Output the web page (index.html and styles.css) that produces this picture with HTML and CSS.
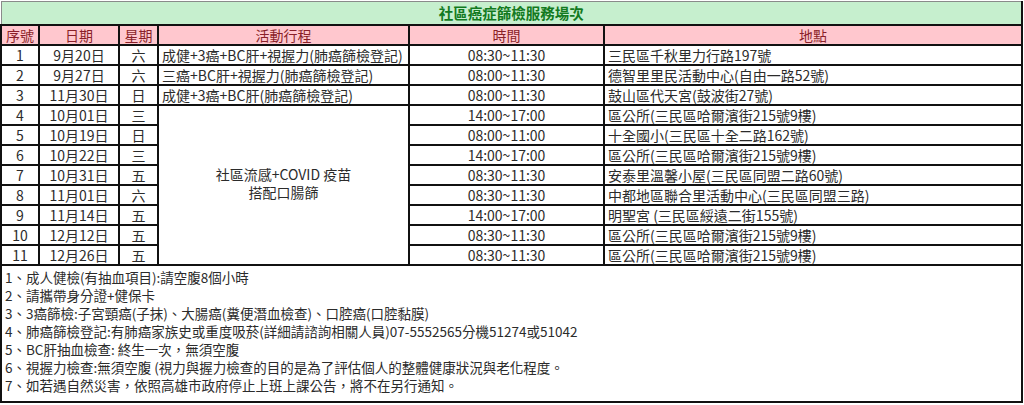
FILE: index.html
```html
<!DOCTYPE html>
<html lang="zh-Hant">
<head>
<meta charset="utf-8">
<title>社區癌症篩檢服務場次</title>
<link rel="stylesheet" href="styles.css">
</head>
<body>
<table class="sheet">
  <colgroup>
    <col class="c-no"><col class="c-date"><col class="c-week"><col class="c-act"><col class="c-time"><col class="c-loc">
  </colgroup>
  <tr class="title-row"><td colspan="6" class="title">社區癌症篩檢服務場次</td></tr>
  <tr class="head-row">
    <th>序號</th><th>日期</th><th>星期</th><th>活動行程</th><th>時間</th><th>地點</th>
  </tr>
  <tr><td class="ctr">1</td><td class="ctr">9月20日</td><td class="ctr">六</td><td class="lft">成健+3癌+BC肝+視握力(肺癌篩檢登記)</td><td class="ctr">08:30~11:30</td><td class="lft">三民區千秋里力行路197號</td></tr>
  <tr><td class="ctr">2</td><td class="ctr">9月27日</td><td class="ctr">六</td><td class="lft">三癌+BC肝+視握力(肺癌篩檢登記)</td><td class="ctr">08:00~11:30</td><td class="lft">德智里里民活動中心(自由一路52號)</td></tr>
  <tr><td class="ctr">3</td><td class="ctr">11月30日</td><td class="ctr">日</td><td class="lft">成健+3癌+BC肝(肺癌篩檢登記)</td><td class="ctr">08:00~11:30</td><td class="lft">鼓山區代天宮(鼓波街27號)</td></tr>
  <tr><td class="ctr">4</td><td class="ctr">10月01日</td><td class="ctr">三</td><td class="ctr merged" rowspan="8">社區流感+COVID 疫苗<br>搭配口腸篩</td><td class="ctr">14:00~17:00</td><td class="lft">區公所(三民區哈爾濱街215號9樓)</td></tr>
  <tr><td class="ctr">5</td><td class="ctr">10月19日</td><td class="ctr">日</td><td class="ctr">08:00~11:00</td><td class="lft">十全國小(三民區十全二路162號)</td></tr>
  <tr><td class="ctr">6</td><td class="ctr">10月22日</td><td class="ctr">三</td><td class="ctr">14:00~17:00</td><td class="lft">區公所(三民區哈爾濱街215號9樓)</td></tr>
  <tr><td class="ctr">7</td><td class="ctr">10月31日</td><td class="ctr">五</td><td class="ctr">08:30~11:30</td><td class="lft">安泰里溫馨小屋(三民區同盟二路60號)</td></tr>
  <tr><td class="ctr">8</td><td class="ctr">11月01日</td><td class="ctr">六</td><td class="ctr">08:30~11:30</td><td class="lft">中都地區聯合里活動中心(三民區同盟三路)</td></tr>
  <tr><td class="ctr">9</td><td class="ctr">11月14日</td><td class="ctr">五</td><td class="ctr">14:00~17:00</td><td class="lft">明聖宮 (三民區綏遠二街155號)</td></tr>
  <tr><td class="ctr">10</td><td class="ctr">12月12日</td><td class="ctr">五</td><td class="ctr">08:30~11:30</td><td class="lft">區公所(三民區哈爾濱街215號9樓)</td></tr>
  <tr><td class="ctr">11</td><td class="ctr">12月26日</td><td class="ctr">五</td><td class="ctr">08:30~11:30</td><td class="lft">區公所(三民區哈爾濱街215號9樓)</td></tr>
  <tr class="notes-row">
    <td colspan="6" class="notes">
      <div class="note">1、成人健檢(有抽血項目):請空腹8個小時</div>
      <div class="note">2、請攜帶身分證+健保卡</div>
      <div class="note">3、3癌篩檢:子宮頸癌(子抹)、大腸癌(糞便潛血檢查)、口腔癌(口腔黏膜)</div>
      <div class="note">4、肺癌篩檢登記:有肺癌家族史或重度吸菸(詳細請諮詢相關人員)07-5552565分機51274或51042</div>
      <div class="note">5、BC肝抽血檢查: 終生一次，無須空腹</div>
      <div class="note">6、視握力檢查:無須空腹 (視力與握力檢查的目的是為了評估個人的整體健康狀況與老化程度。</div>
      <div class="note">7、如若遇自然災害，依照高雄市政府停止上班上課公告，將不在另行通知。</div>
    </td>
  </tr>
</table>
</body>
</html>
```
FILE: styles.css
```css
html, body {
  margin: 0;
  padding: 0;
  background: #ffffff;
}
body {
  font-family: "Noto Sans CJK TC", "Noto Sans", sans-serif;
  font-size: 14px;
  color: #2b2b2b;
}
.sheet {
  border-collapse: collapse;
  table-layout: fixed;
  width: 1021px;
  margin-top: 1px;
}
.c-no { width: 38px; }
.c-date { width: 80px; }
.c-week { width: 39px; }
.c-act { width: 251px; }
.c-time { width: 195px; }
.c-loc { width: 418px; }

.sheet td, .sheet th {
  border: 2px solid #111;
  padding: 0 3px;
  height: 18px;
  line-height: 18px;
  white-space: nowrap;
  overflow: hidden;
  font-weight: normal;
}
.title-row td.title {
  background: #c6efce;
  color: #137a1f;
  text-align: center;
  font-size: 14.5px;
  font-weight: bold;
  height: 22px;
  line-height: 22px;
  border-top: 1px solid #8a8a8a;
  border-left: 1px solid #8a8a8a;
}
.head-row th {
  background: #ffc7ce;
  color: #8a1f28;
  text-align: center;
}
.ctr { text-align: center; }
.lft { text-align: left; }
.sheet td.merged {
  vertical-align: middle;
  line-height: 18px;
  padding-bottom: 4px;
}
.sheet td.notes {
  height: 133px;
  vertical-align: top;
  padding: 2px 2px 0 3px;
  border-top: 2px solid #111;
  font-size: 13.5px;
}
.note {
  line-height: 18px;
  height: 18px;
}
```
